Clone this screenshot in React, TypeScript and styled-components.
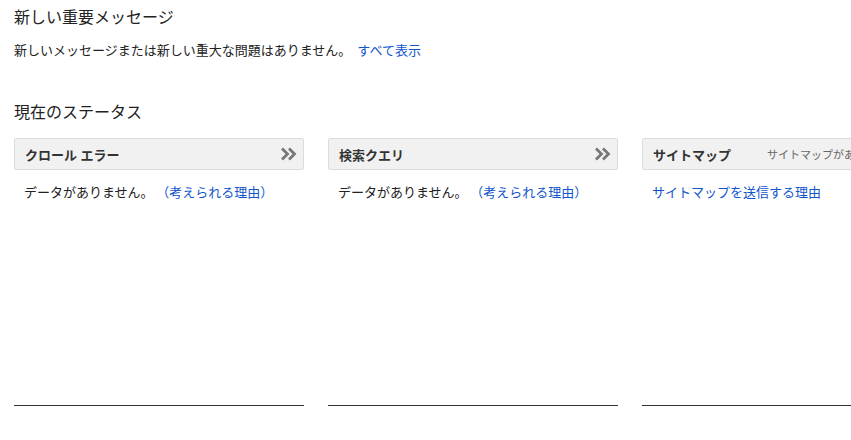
import styled, { createGlobalStyle } from 'styled-components'

const GlobalStyle = createGlobalStyle`
  html, body {
    margin: 0;
    padding: 0;
    background: #fff;
    overflow: hidden;
  }
  body {
    font-family: Arial, "Liberation Sans", "Noto Sans CJK JP", sans-serif;
    color: #222;
  }
`

const Page = styled.div`
  padding: 8px 14px;
  width: 940px;
`

const Heading = styled.h2`
  margin: 0;
  font-size: 16px;
  line-height: 20px;
  font-weight: normal;
  color: #222;
`

const Message = styled.p`
  margin: 14px 0 0;
  font-size: 13px;
  line-height: 18px;
  color: #222;
`

const Link = styled.a<{ $gap?: number }>`
  color: #1155cc;
  text-decoration: none;
  margin-left: ${(p) => p.$gap ?? 0}px;
  cursor: pointer;
`

const Section = styled.section`
  margin-top: 43px;
`

const Panels = styled.div`
  margin-top: 15px;
  display: grid;
  grid-template-columns: repeat(3, 290px);
  gap: 24px;
`

const Panel = styled.div`
  height: 267px;
  border-bottom: 1px solid #333;
  display: flex;
  flex-direction: column;
`

const PanelHeader = styled.div`
  height: 30px;
  border: 1px solid #dcdcdc;
  border-radius: 2px;
  background: #f1f1f1;
  display: flex;
  align-items: center;
  padding: 0 6px 0 10px;
  white-space: nowrap;
  overflow: hidden;
`

const PanelTitle = styled.span<{ $grow?: boolean }>`
  font-size: 13px;
  font-weight: bold;
  color: #333;
  flex: ${(p) => (p.$grow ? 1 : 'none')};
`

const PanelNote = styled.span`
  font-size: 11px;
  color: #666;
  margin-left: 36px;
  flex: none;
`

const PanelBody = styled.div`
  padding: 14px 10px 0;
  font-size: 13px;
  line-height: 18px;
  color: #222;
`

const Chevron = () => (
  <svg width="17" height="14" viewBox="0 0 17 14">
    <path d="M2 1.5 L7.5 7 L2 12.5 M9 1.5 L14.5 7 L9 12.5" fill="none" stroke="#777" strokeWidth="2.8" />
  </svg>
)

const App = () => {
  return (
    <Page>
      <GlobalStyle />
      <Heading>新しい重要メッセージ</Heading>
      <Message>
        新しいメッセージまたは新しい重大な問題はありません。
        <Link $gap={6}>すべて表示</Link>
      </Message>
      <Section>
        <Heading>現在のステータス</Heading>
        <Panels>
          <Panel>
            <PanelHeader>
              <PanelTitle $grow>クロール エラー</PanelTitle>
              <Chevron />
            </PanelHeader>
            <PanelBody>
              データがありません。<Link $gap={9}>（考えられる理由）</Link>
            </PanelBody>
          </Panel>
          <Panel>
            <PanelHeader>
              <PanelTitle $grow>検索クエリ</PanelTitle>
              <Chevron />
            </PanelHeader>
            <PanelBody>
              データがありません。<Link $gap={9}>（考えられる理由）</Link>
            </PanelBody>
          </Panel>
          <Panel>
            <PanelHeader>
              <PanelTitle>サイトマップ</PanelTitle>
              <PanelNote>サイトマップがありません。</PanelNote>
            </PanelHeader>
            <PanelBody>
              <Link>サイトマップを送信する理由</Link>
            </PanelBody>
          </Panel>
        </Panels>
      </Section>
    </Page>
  )
}

export default App
